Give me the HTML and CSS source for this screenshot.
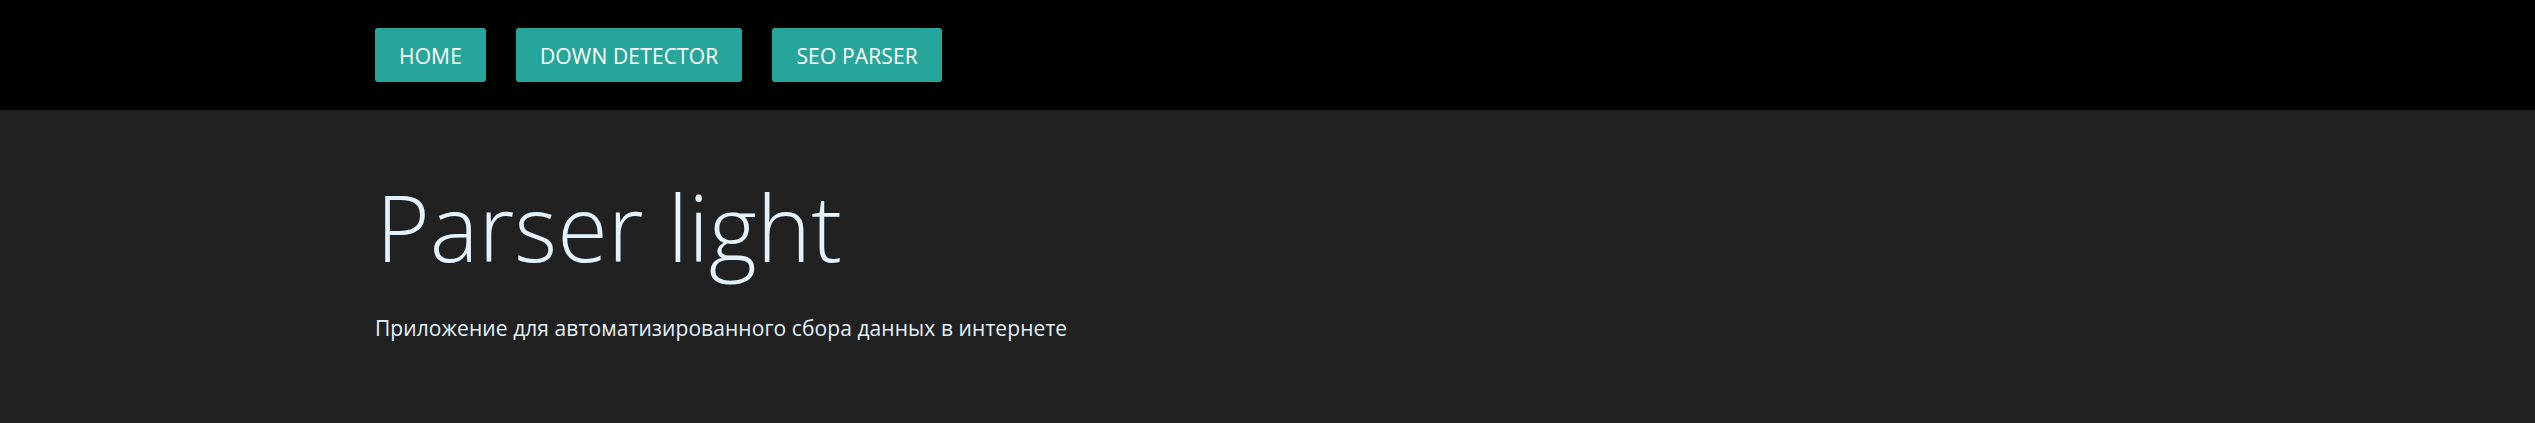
FILE: index.html
```html
<!DOCTYPE html>
<html lang="ru">
<head>
<meta charset="utf-8">
<title>Parser light</title>
<link rel="stylesheet" href="styles.css">
</head>
<body>
<nav class="nav">
  <div class="container nav-inner">
    <a class="btn" href="#">HOME</a>
    <a class="btn" href="#">DOWN DETECTOR</a>
    <a class="btn" href="#">SEO PARSER</a>
  </div>
</nav>
<main class="hero">
  <div class="container">
    <h1 class="title">Parser light</h1>
    <p class="subtitle">Приложение для автоматизированного сбора данных в интернете</p>
  </div>
</main>
</body>
</html>
```

FILE: styles.css
```css
html, body {
  margin: 0;
  padding: 0;
  background: #212121;
  height: 100%;
}
body {
  font-family: "Open Sans", "Noto Sans", sans-serif;
  color: #e3f2fd;
}
.container {
  padding-left: 375px;
}
.nav {
  background: #000;
  height: 110px;
  display: flex;
  align-items: center;
}
.nav-inner {
  display: flex;
  gap: 30px;
  align-items: center;
  margin-top: -1px;
}
.btn {
  display: flex;
  align-items: center;
  justify-content: center;
  height: 54px;
  padding: 2px 24px 0;
  box-sizing: border-box;
  background: #26a69a;
  color: #fff;
  text-decoration: none;
  font-size: 21px;
  letter-spacing: 0.15px;
  border-radius: 3px;
}
.hero {
  padding-top: 62px;
}
.title {
  margin: 0;
  font-weight: 300;
  font-size: 92px;
  line-height: 110px;
  margin-left: 1px;
}
.subtitle {
  margin: 31px 0 0;
  font-size: 21px;
  letter-spacing: 0.08px;
  line-height: 30px;
}
```
